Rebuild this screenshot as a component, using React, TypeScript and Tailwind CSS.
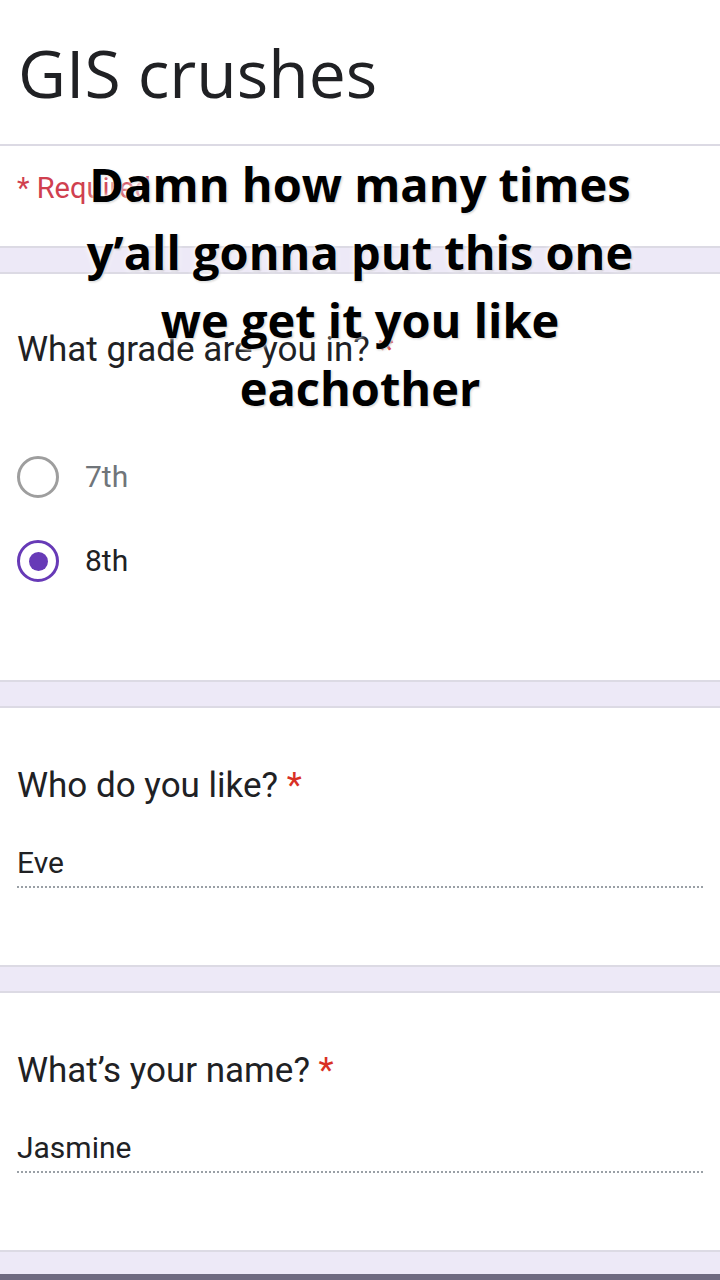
import React from "react";

const Band = () => (
  <div className="h-[28px] bg-[#ede9f7] border-y-2 border-[#dcdae4]" />
);

const Radio = ({ checked, label }: { checked?: boolean; label: string }) => (
  <div className="flex items-center h-[42px]">
    {checked ? (
      <div className="w-[42px] h-[42px] rounded-full border-[3px] border-[#673ab7] flex items-center justify-center">
        <div className="w-[19px] h-[19px] rounded-full bg-[#673ab7]" />
      </div>
    ) : (
      <div className="w-[42px] h-[42px] rounded-full border-[3px] border-[#9e9e9e]" />
    )}
    <span
      className={`ml-[26px] text-[30px] leading-[36px] ${checked ? "text-[#202124]" : "text-[#70757a]"}`}
    >
      {label}
    </span>
  </div>
);

const TextQ = ({ q, a }: { q: string; a: string }) => (
  <div className="h-[257px] bg-white px-[17px] pt-[59px]">
    <div className="text-[35px] leading-[38px] text-[#202124]">
      {q} <span className="text-[#d93025]">*</span>
    </div>
    <div className="mt-[40px] text-[30px] leading-[36px] text-[#202124]">{a}</div>
    <div className="mt-[5px] border-b-2 border-dotted border-[#9aa0a6]" />
  </div>
);

export default function App() {
  return (
    <div
      className="relative w-[720px] h-[1280px] overflow-hidden bg-white"
      style={{ fontFamily: "Roboto, 'Liberation Sans', sans-serif" }}
    >
      <div className="h-[146px] bg-white border-b-2 border-[#dcdae4] px-[18px] pt-[32px]">
        <div
          className="text-[66px] leading-[80px] text-[#202124]"
          style={{ fontFamily: "'Open Sans', Roboto, sans-serif" }}
        >
          GIS crushes
        </div>
      </div>
      <div className="h-[100px] bg-white px-[17px] pt-[24px]">
        <span className="text-[29px] leading-[36px] text-[#d0404f]">* Required</span>
      </div>
      <Band />
      <div className="h-[406px] bg-white px-[17px] pt-[57px]">
        <div className="text-[35px] leading-[38px] text-[#202124]">
          What grade are you in? <span className="text-[#d93025]">*</span>
        </div>
        <div className="mt-[87px] flex flex-col gap-[42px]">
          <Radio label="7th" />
          <Radio checked label="8th" />
        </div>
      </div>
      <Band />
      <TextQ q="Who do you like?" a="Eve" />
      <Band />
      <TextQ q="What’s your name?" a="Jasmine" />
      <div className="h-[24px] bg-[#ede9f7] border-t-2 border-[#dcdae4]" />
      <div className="h-[10px] bg-[#6e6a80]" />

      <div
        className="absolute left-0 right-0 top-[150px] text-center text-[47px] leading-[68px] font-bold text-black"
        style={{
          fontFamily: "'Open Sans', Lato, sans-serif",
          fontVariantLigatures: "none",
          textShadow: "0 0 3px #fff, 0 0 6px #fff, 1px 1px 2px rgba(0,0,0,0.35)",
        }}
      >
        <div>Damn how many times</div>
        <div>y’all gonna put this one</div>
        <div>we get it you like</div>
        <div>eachother</div>
      </div>
    </div>
  );
}
